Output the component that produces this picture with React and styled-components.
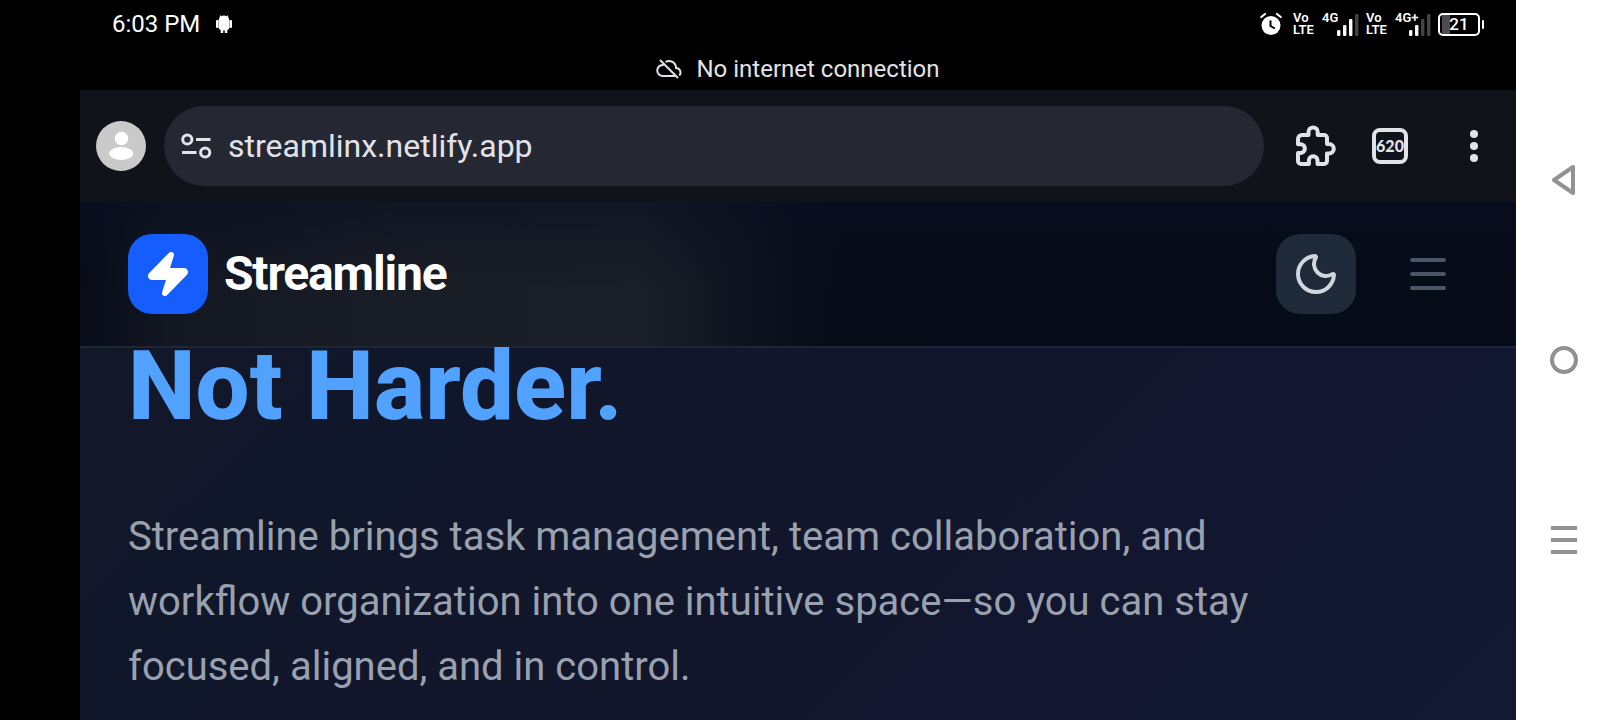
import React from 'react';
import styled, { createGlobalStyle } from 'styled-components';
import { Zap, Moon } from 'lucide-react';

const GlobalStyle = createGlobalStyle`
  *, *::before, *::after { box-sizing: border-box; }
  body { margin: 0; background: #000; font-family: Roboto, "Liberation Sans", sans-serif; }
  h1, p { margin: 0; }
  button { border: 0; padding: 0; background: none; color: inherit; font: inherit; cursor: pointer; }
  svg { display: block; flex: none; }
`;

const Device = styled.div`
  display: flex;
  min-height: 100vh;
  padding-left: 80px;
  background: #000;
`;

const Screen = styled.div`
  flex: 1;
  min-width: 0;
  display: flex;
  flex-direction: column;
`;

const StatusBar = styled.div`
  display: flex;
  align-items: center;
  justify-content: space-between;
  height: 48px;
  padding: 0 32px;
  color: #fff;
`;

const Clock = styled.div`
  display: flex;
  align-items: center;
  gap: 16px;
  font-size: 24px;
  line-height: 28px;
`;

const Indicators = styled.div`
  display: flex;
  align-items: center;
  gap: 7px;
`;

const Volte = styled.span`
  display: flex;
  flex-direction: column;
  width: 22px;
  margin-left: ${(p) => (p.$first ? '4px' : '0')};
  font-size: 13px;
  font-weight: 600;
  line-height: 12px;
`;

const Network = styled.span`
  display: grid;
  width: ${(p) => p.$width};
  height: 24px;
  font-size: 13px;
  font-weight: 600;
  line-height: 12px;
  > * { grid-area: 1 / 1; }
  > svg { justify-self: end; align-self: end; }
`;

const Battery = styled.span`
  display: flex;
  align-items: center;
  gap: 2px;
  &::after {
    content: '';
    width: 2px;
    height: 9px;
    border-radius: 1px;
    background: #fff;
  }
`;

const BatteryCase = styled.span`
  display: flex;
  align-items: center;
  justify-content: center;
  width: 42px;
  height: 23px;
  border: 2px solid #fff;
  border-radius: 5px;
  background: linear-gradient(90deg, transparent 2px, #4c4c4c 2px 10px, transparent 10px);
  font-size: 17px;
  font-weight: 500;
  line-height: 20px;
`;

const OfflineNotice = styled.div`
  display: flex;
  align-items: center;
  justify-content: center;
  gap: 14px;
  height: 42px;
  color: #e3e2e6;
  font-size: 24px;
  line-height: 28px;
`;

const BrowserBar = styled.div`
  display: flex;
  align-items: center;
  height: 112px;
  padding: 0 8px 0 16px;
  background: #11131a;
  color: #e2e2e9;
`;

const Avatar = styled.button`
  width: 50px;
  height: 50px;
  border-radius: 50%;
  background: #cacaca;
`;

const AddressBar = styled.label`
  flex: 1;
  display: flex;
  align-items: center;
  gap: 16px;
  height: 80px;
  margin: 0 32px 0 18px;
  padding: 0 16px;
  border-radius: 40px;
  background: #252833;
`;

const AddressInput = styled.input`
  flex: 1;
  min-width: 0;
  height: 44px;
  padding: 0;
  border: 0;
  outline: 0;
  background: transparent;
  color: #e2e2e9;
  font: 32px/44px Roboto, "Liberation Sans", sans-serif;
`;

const BrowserActions = styled.div`
  display: flex;
  align-items: center;
  gap: 36px;
  padding-right: 16px;
`;

const TabCount = styled.button`
  display: flex;
  align-items: center;
  justify-content: center;
  width: 36px;
  height: 36px;
  border: 4px solid #e2e2e9;
  border-radius: 8px;
  font: 900 16px/20px Lato, sans-serif;
`;

const MoreButton = styled.button`
  margin-left: 12px;
`;

const SiteHeader = styled.header`
  display: flex;
  align-items: center;
  justify-content: space-between;
  height: 146px;
  padding: 0 48px;
  border-bottom: 2px solid #1e2635;
  background:
    linear-gradient(180deg, rgba(8, 14, 32, 0.5), transparent 60%),
    linear-gradient(90deg, #070c19 0, #121722 90px, #191d26 320px, #191e27 560px, #131923 620px, #0a101c 700px, #050b17 760px);
`;

const Brand = styled.a`
  display: flex;
  align-items: center;
  gap: 16px;
  color: #fff;
  text-decoration: none;
  font-size: 48px;
  font-weight: 700;
  line-height: 64px;
  letter-spacing: -0.025em;
`;

const LogoTile = styled.span`
  display: grid;
  place-items: center;
  width: 80px;
  height: 80px;
  border-radius: 24px;
  background: #155dfc;
`;

const HeaderActions = styled.div`
  display: flex;
  align-items: center;
  gap: 32px;
`;

const IconButton = styled.button`
  display: grid;
  place-items: center;
  width: 80px;
  height: 80px;
  border-radius: 24px;
  background: ${(p) => (p.$filled ? '#1e2939' : 'transparent')};
  color: ${(p) => (p.$filled ? '#d1d5dc' : '#4a5565')};
`;

const Hero = styled.main`
  flex: 1;
  padding: 0 48px 16px;
  background: linear-gradient(135deg, #111829 0%, #11162c 50%, #131833 100%);
`;

const Title = styled.h1`
  color: #51a2ff;
  font-size: 96px;
  font-weight: 800;
  line-height: 76px;
`;

const Lead = styled.p`
  max-width: 1152px;
  margin-top: 80px;
  color: #99a1af;
  font-size: 40px;
  line-height: 65px;
`;

const SystemNav = styled.nav`
  display: flex;
  flex-direction: column;
  align-items: center;
  justify-content: space-around;
  width: 96px;
  padding: 90px 0;
  background: #fff;
  color: #929292;
`;

const NavButton = styled.button`
  display: grid;
  place-items: center;
  width: 48px;
  height: 48px;
`;

const SignalBars = ({ strength }) => (
  <svg width="22" height="24" viewBox="0 0 22 24" aria-hidden="true">
    {[[0, 6], [6, 11], [12, 17], [18, 22]].map(([x, h], i) => (
      <rect key={x} x={x} y={24 - h} width="3.4" height={h} rx="1.2" fill={i < strength ? '#fff' : '#444'} />
    ))}
  </svg>
);

export default function App() {
  return (
    <>
      <GlobalStyle />
      <Device>
        <Screen>
          <StatusBar>
            <Clock>
              <span>6:03 PM</span>
              <svg width="16" height="18" viewBox="0 0 16 18" fill="#fff" aria-hidden="true">
                <path d="M4 0l1.200 1.300A5 5 0 0 1 8 .5a5 5 0 0 1 2.800 .8L12 0l.3 2.500q1.200 1.300 1.200 3.500v6q0 2.500-2.200 3V18H8.800v-2.500H7.200V18H4.700v-3Q2.500 14.500 2.500 12V6q0-2.200 1.200-3.500z" />
                <rect x="0" y="5" width="2.400" height="8" rx="1" />
                <rect x="13.600" y="5" width="2.400" height="8" rx="1" />
              </svg>
            </Clock>
            <Indicators>
              <svg width="22" height="24" viewBox="0 0 22 24" fill="none" aria-hidden="true">
                <circle cx="11" cy="13.500" r="9.500" fill="#fff" />
                <path d="M1.300 5 5 2M20.700 5 17 2" stroke="#fff" strokeWidth="2.200" strokeLinecap="round" />
                <path d="M10.500 8.500v5.500l4.500 2.500" stroke="#000" strokeWidth="2" />
              </svg>
              <Volte $first><span>Vo</span><span>LTE</span></Volte>
              <Network $width="37px"><span>4G</span><SignalBars strength={3} /></Network>
              <Volte><span>Vo</span><span>LTE</span></Volte>
              <Network $width="36px"><span>4G+</span><SignalBars strength={2} /></Network>
              <Battery><BatteryCase>21</BatteryCase></Battery>
            </Indicators>
          </StatusBar>
          <OfflineNotice role="status">
            <svg width="26" height="20" viewBox="0 0 26 20" fill="none" stroke="currentColor" strokeWidth="2" aria-hidden="true">
              <path d="M4 1l18 18M19 17H7a5.500 5.500 0 0 1-.5-11L8 5.500M9.500 3a7 7 0 0 1 10.500 6a4.500 4.500 0 0 1 3.300 7.500" />
            </svg>
            <span>No internet connection</span>
          </OfflineNotice>
          <BrowserBar>
            <Avatar aria-label="Account">
              <svg width="50" height="50" viewBox="0 0 50 50" fill="#fff" aria-hidden="true">
                <circle cx="25.500" cy="17.500" r="6.700" />
                <ellipse cx="25.200" cy="32.500" rx="12" ry="6.500" />
              </svg>
            </Avatar>
            <AddressBar>
              <svg width="32" height="26" viewBox="0 0 32 26" fill="none" stroke="#e2e2e9" strokeWidth="3" aria-hidden="true">
                <circle cx="7.300" cy="6.500" r="4.600" />
                <path d="M16 6.500h14.500M2 19.500h14.500" />
                <circle cx="25.200" cy="19.500" r="4.600" />
              </svg>
              <AddressInput type="text" aria-label="Address" defaultValue="streamlinx.netlify.app" />
            </AddressBar>
            <BrowserActions>
              <button aria-label="Extensions">
                <svg width="40" height="42" viewBox="0 0 40 42" fill="none" stroke="currentColor" strokeWidth="4" strokeLinejoin="round" aria-hidden="true">
                  <path d="M6 10H12.500V7a4.600 4.600 0 0 1 9.200 0V10H28a3 3 0 0 1 3 3V19H33a4.800 4.800 0 0 1 0 9.600H31V36a3 3 0 0 1-3 3H21.500V35.500a4.300 4.300 0 0 0-8.600 0V39H5a3 3 0 0 1-3-3V28H4.500a4.400 4.400 0 0 0 0-8.800H2V14a4 4 0 0 1 4-4z" />
                </svg>
              </button>
              <TabCount aria-label="620 open tabs">620</TabCount>
              <MoreButton aria-label="More">
                <svg width="36" height="36" viewBox="0 0 36 36" fill="currentColor" aria-hidden="true">
                  <circle cx="18" cy="6" r="4" />
                  <circle cx="18" cy="18" r="4" />
                  <circle cx="18" cy="30" r="4" />
                </svg>
              </MoreButton>
            </BrowserActions>
          </BrowserBar>
          <SiteHeader>
            <Brand href="#">
              <LogoTile><Zap size={48} fill="currentColor" /></LogoTile>
              <span>Streamline</span>
            </Brand>
            <HeaderActions>
              <IconButton $filled aria-label="Toggle theme">
                <Moon size={48} />
              </IconButton>
              <IconButton aria-label="Open menu">
                <svg width="48" height="48" viewBox="0 0 48 48" stroke="currentColor" strokeWidth="4" strokeLinecap="round" aria-hidden="true">
                  <path d="M8 10h32M8 24h32M8 38h32" />
                </svg>
              </IconButton>
            </HeaderActions>
          </SiteHeader>
          <Hero>
            <Title>Not Harder.</Title>
            <Lead>
              Streamline brings task management, team collaboration, and workflow organization into one intuitive
              space—so you can stay focused, aligned, and in control.
            </Lead>
          </Hero>
        </Screen>
        <SystemNav aria-label="System navigation">
          <NavButton aria-label="Back">
            <svg width="26" height="32" viewBox="0 0 26 32" fill="none" stroke="currentColor" strokeWidth="4" strokeLinejoin="round" aria-hidden="true">
              <path d="M22 3v26L3 16z" />
            </svg>
          </NavButton>
          <NavButton aria-label="Home">
            <svg width="28" height="28" viewBox="0 0 28 28" fill="none" stroke="currentColor" strokeWidth="4" aria-hidden="true">
              <circle cx="14" cy="14" r="12" />
            </svg>
          </NavButton>
          <NavButton aria-label="Recent apps">
            <svg width="26" height="28" viewBox="0 0 26 28" stroke="currentColor" strokeWidth="4" aria-hidden="true">
              <path d="M0 2h26M0 14h26M0 26h26" />
            </svg>
          </NavButton>
        </SystemNav>
      </Device>
    </>
  );
}
